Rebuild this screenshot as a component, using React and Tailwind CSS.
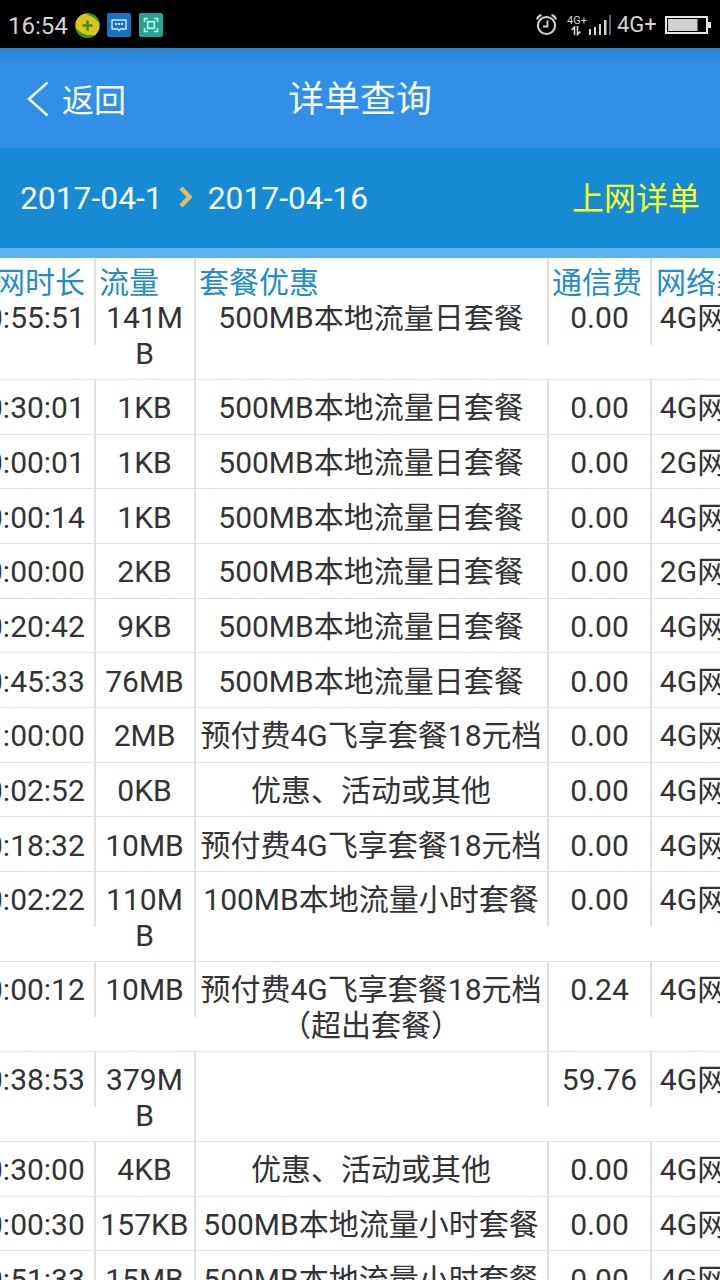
import React from 'react';

const rows = [
  { time: '00:55:51', flow: ['141M', 'B'], plan: ['500MB本地流量日套餐'], fee: '0.00', net: '4G网络' },
  { time: '00:30:01', flow: ['1KB'], plan: ['500MB本地流量日套餐'], fee: '0.00', net: '4G网络' },
  { time: '00:00:01', flow: ['1KB'], plan: ['500MB本地流量日套餐'], fee: '0.00', net: '2G网络' },
  { time: '00:00:14', flow: ['1KB'], plan: ['500MB本地流量日套餐'], fee: '0.00', net: '4G网络' },
  { time: '00:00:00', flow: ['2KB'], plan: ['500MB本地流量日套餐'], fee: '0.00', net: '2G网络' },
  { time: '00:20:42', flow: ['9KB'], plan: ['500MB本地流量日套餐'], fee: '0.00', net: '4G网络' },
  { time: '00:45:33', flow: ['76MB'], plan: ['500MB本地流量日套餐'], fee: '0.00', net: '4G网络' },
  { time: '01:00:00', flow: ['2MB'], plan: ['预付费4G飞享套餐18元档'], fee: '0.00', net: '4G网络' },
  { time: '00:02:52', flow: ['0KB'], plan: ['优惠、活动或其他'], fee: '0.00', net: '4G网络' },
  { time: '00:18:32', flow: ['10MB'], plan: ['预付费4G飞享套餐18元档'], fee: '0.00', net: '4G网络' },
  { time: '00:02:22', flow: ['110M', 'B'], plan: ['100MB本地流量小时套餐'], fee: '0.00', net: '4G网络' },
  { time: '00:00:12', flow: ['10MB'], plan: ['预付费4G飞享套餐18元档', '（超出套餐）'], fee: '0.24', net: '4G网络' },
  { time: '00:38:53', flow: ['379M', 'B'], plan: [''], fee: '59.76', net: '4G网络' },
  { time: '00:30:00', flow: ['4KB'], plan: ['优惠、活动或其他'], fee: '0.00', net: '4G网络' },
  { time: '00:00:30', flow: ['157KB'], plan: ['500MB本地流量小时套餐'], fee: '0.00', net: '4G网络' },
  { time: '00:51:33', flow: ['15MB'], plan: ['500MB本地流量小时套餐'], fee: '0.00', net: '4G网络' }
];

const columns = [
  { title: '上网时长', width: 'w-[135px]', pad: 'pl-1' },
  { title: '流量', width: 'w-[100px]', pad: 'pl-[3px]' },
  { title: '套餐优惠', width: 'w-[353px]', pad: 'pl-[3px]' },
  { title: '通信费', width: 'w-[103px]', pad: 'pl-[3px]' },
  { title: '网络类型', width: 'w-[135px]', pad: 'pl-1' }
];

const StatusBar = () => (
  <div className="h-12 bg-black flex items-center justify-between pl-2 pr-[9px] pt-[2px] text-[#d4d4d4]">
    <div className="flex items-center">
      <span className="text-[24px] leading-[30px] w-[67px] pt-[2px]">16:54</span>
      <svg className="w-[25px] h-[25px]" viewBox="0 0 25 25">
        <circle cx="12.5" cy="12.5" r="12.2" fill="#d9c51b" />
        <path d="M10 .6A12 12 0 0 1 24.6 11C20 4 15 3 10 .6zM.4 14A12 12 0 0 0 20 22C12 23 5 21 .4 14z" fill="#2f9a1c" />
        <path d="M12.5 7.5v10M7.5 12.5h10" stroke="#3f8f1c" strokeWidth="2.6" />
      </svg>
      <svg className="w-6 h-6 ml-[7px]" viewBox="0 0 24 24">
        <rect width="24" height="24" rx="2" fill="#1572c4" />
        <path d="M5 7h14v9h-5.5L12 17.5 10.5 16H5z" fill="none" stroke="#d5e6f5" strokeWidth="1.4" />
        <path d="M8 11h2M11 11h2M14 11h2" stroke="#d5e6f5" strokeWidth="1.8" />
      </svg>
      <svg className="w-6 h-6 ml-2" viewBox="0 0 24 24">
        <rect width="24" height="24" rx="2" fill="#23a596" />
        <path d="M5.5 9V5.5H9M15 5.5h3.5V9M18.5 15v3.5H15M9 18.5H5.5V15" fill="none" stroke="#c8ebe5" strokeWidth="1.6" />
        <rect x="8.7" y="8.7" width="6.6" height="6.6" fill="none" stroke="#c8ebe5" strokeWidth="1.7" />
      </svg>
    </div>
    <div className="flex items-center">
      <svg className="w-[22px] h-[22px] mr-[1px]" viewBox="0 0 22 22" fill="none" stroke="#d4d4d4">
        <circle cx="10.5" cy="11.5" r="8.6" strokeWidth="2" />
        <path d="M11.5 6.5v6H7" strokeWidth="1.8" />
        <path d="M1 5.5Q2 2 5.5 1M20 5.5Q19 2 15.5 1" strokeWidth="2" />
      </svg>
      <div className="ml-[7px] w-[22px] flex flex-col items-center">
        <span className="text-[11px] leading-[11px]">4G+</span>
        <svg className="w-[10px] h-[10px] mr-[2px]" viewBox="0 0 10 10" fill="none" stroke="#d4d4d4" strokeWidth="1.6">
          <path d="M3.5 9V1L.6 4M6.5 0v8.5l2.900-3" />
        </svg>
      </div>
      <svg className="w-[23px] h-5 ml-[1px]" viewBox="0 0 23 20" fill="#d4d4d4">
        <rect x="0" y="14" width="2" height="6" />
        <rect x="5" y="12" width="2" height="8" />
        <rect x="10" y="9" width="2" height="11" />
        <rect x="15" y="5" width="2.5" height="15" />
        <rect x="20" y="0" width="2" height="20" fill="#666" />
      </svg>
      <span className="ml-[5px] w-[39px] text-[22px] leading-[30px]">4G+</span>
      <svg className="w-[46px] h-[18px] ml-[9px]" viewBox="0 0 46 18">
        <rect x="1" y="1" width="41" height="16" fill="none" stroke="#e6e6e6" strokeWidth="2" />
        <rect x="3" y="3" width="29.5" height="12" fill="#d0d0d0" />
        <rect x="43" y="6" width="3" height="6" fill="#e6e6e6" />
      </svg>
    </div>
  </div>
);

const Cell = ({ lines, width, className = '' }) => (
  <div className={`${width} ${lines.length > 1 ? 'h-[90px]' : 'h-[54.7px]'} shrink-0 border-r-2 border-[#e0e0e0] pt-[10.4px] text-center whitespace-nowrap ${className}`}>
    {lines.map((line, i) => (
      <div key={i} className="h-[35.5px] leading-[35.5px] flex justify-center">{line}</div>
    ))}
  </div>
);

const RecordRow = ({ row }) => {
  const tall = row.flow.length > 1 || row.plan.length > 1;
  return (
    <div className={`flex items-start border-b border-[#e0e0e0] ${tall ? 'h-[90px]' : 'h-[54.7px]'}`}>
      <Cell lines={[row.time]} width={columns[0].width} className="pr-[1px]" />
      <Cell lines={row.flow} width={columns[1].width} className="pr-[1px]" />
      <Cell lines={row.plan} width={columns[2].width} className="pr-[1px]" />
      <Cell lines={[row.fee]} width={columns[3].width} />
      <Cell lines={[row.net]} width={columns[4].width} className="pr-5" />
    </div>
  );
};

const App = () => {
  return (
    <div className="w-[720px] h-[1280px] overflow-hidden flex flex-col bg-white font-['Roboto','Noto_Sans_CJK_SC',sans-serif]">
      <StatusBar />

      <div className="h-[100px] shrink-0 bg-[#318fe8] bg-linear-to-b from-[#2d84d1] to-[#318fe8] to-20% grid grid-cols-3 items-center pt-[3px] text-[#f4faff]">
        <button className="flex items-center pl-[27px] text-[32px] leading-10">
          <svg className="w-[22px] h-9 mr-[13px] mb-[2px]" viewBox="0 0 22 36" fill="none" stroke="currentColor" strokeWidth="2.4">
            <path d="M20.5 1.5L2 18l18.5 16.5" />
          </svg>
          <span className="pt-[2px]">返回</span>
        </button>
        <h1 className="text-center text-[36px] leading-[44px]">详单查询</h1>
      </div>

      <div className="h-[110px] shrink-0 bg-[#168bd3] border-b-10 border-[#5bb5ea] flex items-center px-5 pt-[2px] text-[32px] text-[#f4faff]">
        <span className="text-[31.8px]">2017-04-1</span>
        <svg className="w-[14px] h-[22px] ml-4 mr-[15px] mb-1" viewBox="0 0 14 22" fill="none" stroke="#dfbf62" strokeWidth="4.5">
          <path d="M2 2l8.5 9L2 20" />
        </svg>
        <span className="text-[31.8px]">2017-04-16</span>
        <span className="ml-auto text-[#f6ff1e]">上网详单</span>
      </div>

      {/* table is scrolled sideways, the first visible column is cut off */}
      <div className="flex-1 min-h-0 overflow-hidden flex flex-col text-[30px] text-[#333]">
        <div className="w-[830px] -ml-[39px] h-[47px] shrink-0 flex text-[#248bd0]">
          {columns.map((col) => (
            <div key={col.title} className={`${col.width} ${col.pad} shrink-0 border-r-2 border-[#e0e0e0] pt-[3px] leading-[44px] whitespace-nowrap`}>
              {col.title}
            </div>
          ))}
        </div>
        <div className="flex-1 min-h-0 overflow-hidden">
          <div className="w-[830px] -ml-[39px] -mt-[15.1px]">
            {rows.map((row) => (
              <RecordRow key={row.time} row={row} />
            ))}
          </div>
        </div>
      </div>
    </div>
  );
};

export default App;
